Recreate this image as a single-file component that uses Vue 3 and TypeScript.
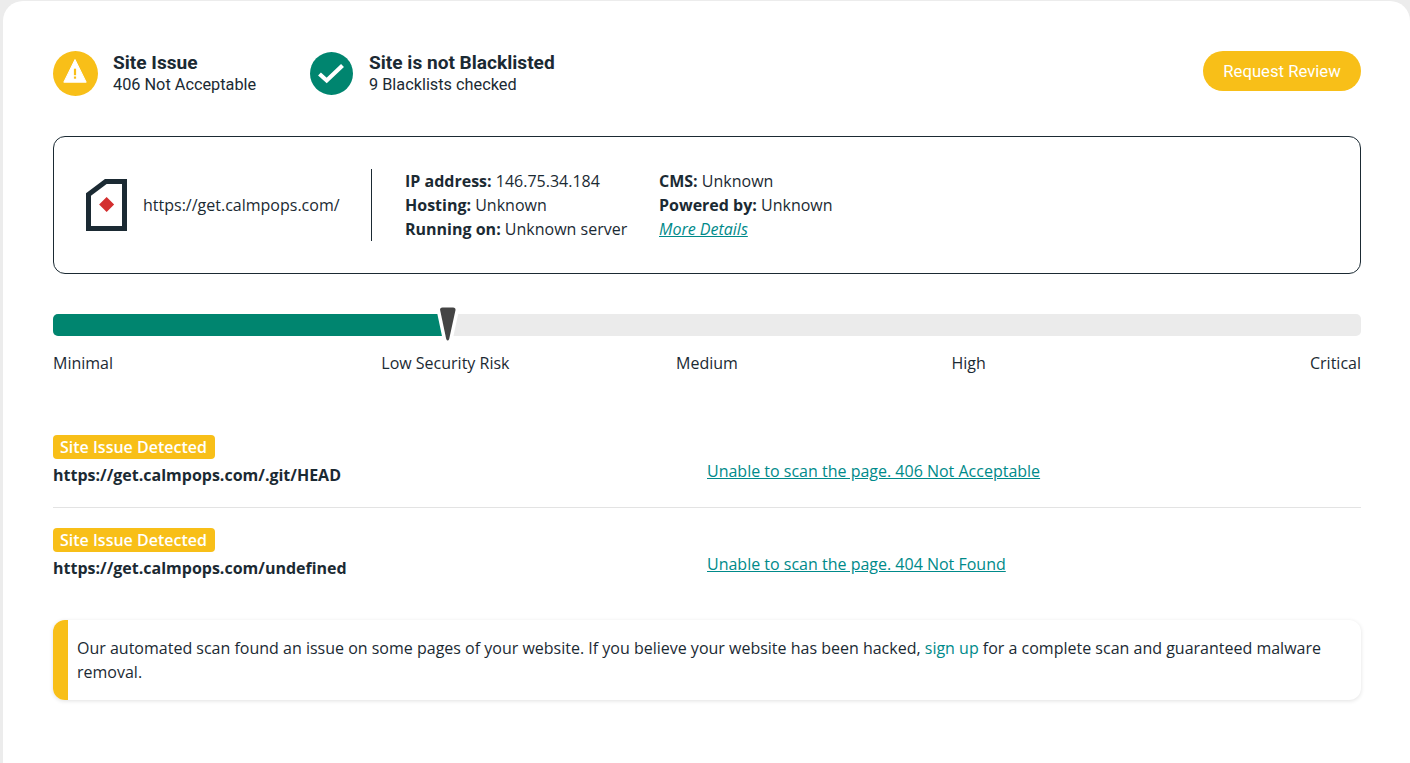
<script setup lang="ts">
interface Row { url: string; message: string }
const rows: Row[] = [
  { url: 'https://get.calmpops.com/.git/HEAD', message: 'Unable to scan the page. 406 Not Acceptable' },
  { url: 'https://get.calmpops.com/undefined', message: 'Unable to scan the page. 404 Not Found' },
]
const scale = ['Minimal', 'Low Security Risk', 'Medium', 'High', 'Critical']
</script>

<template>
  <div class="page">
    <main class="card">
      <header class="top">
        <div class="status status-issue">
          <svg width="45" height="45" viewBox="0 0 45 45">
            <circle cx="22.5" cy="22.5" r="22.5" fill="#f8bf18" />
            <path d="M22 8.500 L33.200 31.200 H10.800 Z" fill="#fff" stroke="#fff" stroke-width="1" stroke-linejoin="round" />
            <rect x="20.900" y="17.700" width="2.200" height="6.500" fill="#f8bf18" />
            <rect x="20.900" y="25.500" width="2.200" height="2.200" fill="#f8bf18" />
          </svg>
          <div class="status-text">
            <div class="h">Site Issue</div>
            <div class="s">406 Not Acceptable</div>
          </div>
        </div>
        <div class="status status-ok">
          <svg width="43" height="43" viewBox="0 0 43 43">
            <circle cx="21.5" cy="21.5" r="21.5" fill="#00856f" />
            <path d="M9.500 22 L16.700 28.500 L32.500 13.500" fill="none" stroke="#fff" stroke-width="4.2" />
          </svg>
          <div class="status-text">
            <div class="h">Site is not Blacklisted</div>
            <div class="s">9 Blacklists checked</div>
          </div>
        </div>
        <button class="review">Request Review</button>
      </header>

      <section class="info">
        <div class="site">
          <svg width="41" height="52" viewBox="0 0 41 52">
            <path d="M2.500 15.500 L19.800 2.500 H38.500 V49.500 H2.500 Z" fill="#fff" stroke="#1b2a33" stroke-width="5" />
            <path d="M20.600 18 L28.100 25.500 L20.600 33 L13.100 25.500 Z" fill="#d32f2f" />
          </svg>
          <span class="url">https://get.calmpops.com/</span>
        </div>
        <div class="divider"></div>
        <div class="col col-1">
          <div><b>IP address:</b> 146.75.34.184</div>
          <div><b>Hosting:</b> Unknown</div>
          <div><b>Running on:</b> Unknown server</div>
        </div>
        <div class="col">
          <div><b>CMS:</b> Unknown</div>
          <div><b>Powered by:</b> Unknown</div>
          <div><a class="more" href="#">More Details</a></div>
        </div>
      </section>

      <section class="risk">
        <div class="track">
          <div class="fill"></div>
          <svg class="needle" width="22" height="34" viewBox="0 0 22 34">
            <path d="M4.100 3 Q3.800 0.500 6.500 0.500 H17 Q19.700 0.500 19.500 3 L13.200 32 Q11.700 35 10.200 32 Z" fill="#444" stroke="#fff" stroke-width="7" paint-order="stroke" stroke-linejoin="round" />
          </svg>
        </div>
        <div class="scale">
          <span v-for="s in scale" :key="s">{{ s }}</span>
        </div>
      </section>

      <section class="rows">
        <div v-for="r in rows" :key="r.url" class="row">
          <div class="row-left">
            <span class="badge">Site Issue Detected</span>
            <div class="row-url">{{ r.url }}</div>
          </div>
          <a class="row-msg" href="#">{{ r.message }}</a>
        </div>
      </section>

      <aside class="note">
        Our automated scan found an issue on some pages of your website. If you believe your website has been hacked, <a href="#">sign up</a> for a complete scan and guaranteed malware removal.
      </aside>
    </main>
  </div>
</template>

<style>
html, body { margin: 0; background: #ececec; }
</style>

<style scoped>
.page {
  height: 763px;
  overflow: hidden;
  padding: 1px 0 0 3px;
  box-sizing: border-box;
  font-family: "Open Sans", "Noto Sans", sans-serif;
  font-size: 16px;
  line-height: 24px;
  color: #1b2a33;
}
.card {
  background: #fff;
  border-radius: 20px;
  height: 780px;
  box-sizing: border-box;
  padding: 50px 49px 0 50px;
}
.top { display: flex; align-items: flex-start; height: 46px; }
.status { display: flex; align-items: center; height: 45px; }
.status-issue { width: 257px; gap: 15px; }
.status-ok { gap: 16px; }
.status-text { display: flex; flex-direction: column; padding-bottom: 1px; }
.h { font-family: Roboto, sans-serif; font-weight: 700; font-size: 19.1px; line-height: 24px; }
.s { font-family: Roboto, sans-serif; font-size: 16.3px; line-height: 20px; }
.review {
  margin-left: auto;
  width: 158px;
  height: 40px;
  border: 0;
  border-radius: 20px;
  background: #f8bf18;
  color: #fff;
  font-family: Roboto, sans-serif;
  font-size: 16.7px;
  padding: 0;
}
.info {
  margin-top: 39px;
  height: 138px;
  box-sizing: border-box;
  border: 1px solid #1b2a33;
  border-radius: 12px;
  display: flex;
  align-items: center;
  padding-left: 32px;
}
.site { display: flex; align-items: center; gap: 16px; width: 285px; }
.url { white-space: nowrap; }
.divider { width: 1px; height: 72px; background: #1b2a33; }
.col { white-space: nowrap; }
.col-1 { margin-left: 33px; width: 254px; }
.more { color: #008a8a; font-style: italic; }
.risk { margin-top: 40px; }
.track { position: relative; height: 22px; background: #ebebeb; border-radius: 5px; }
.fill { width: 394px; height: 100%; background: #00856f; border-radius: 5px 0 0 5px; }
.needle { position: absolute; left: 383px; top: -7px; overflow: visible; }
.scale { display: grid; grid-template-columns: repeat(5, 1fr); margin-top: 15px; text-align: center; }
.scale span:first-child { text-align: left; }
.scale span:last-child { text-align: right; }
.rows { margin-top: 40px; }
.row { display: flex; padding: 20px 0; border-bottom: 1px solid #e3e3e3; }
.row:last-child { border-bottom: 0; }
.row-left { width: 654px; }
.badge {
  display: block;
  width: fit-content;
  background: #f8bf18;
  color: #fff;
  font-weight: 600;
  line-height: 24px;
  padding: 0 8px 0 7px;
  border-radius: 4px;
}
.row-url { font-weight: 700; margin-top: 4px; }
.row-msg { color: #008a8a; align-self: flex-start; margin-top: 24px; }
.note {
  margin-top: 20px;
  height: 80px;
  box-sizing: border-box;
  border-left: 15px solid #f8bf18;
  border-radius: 12px;
  box-shadow: 0 1px 4px rgba(0,0,0,.12);
  padding: 16px 24px 0 9px;
}
.note a { color: #008a8a; text-decoration: none; }
</style>
